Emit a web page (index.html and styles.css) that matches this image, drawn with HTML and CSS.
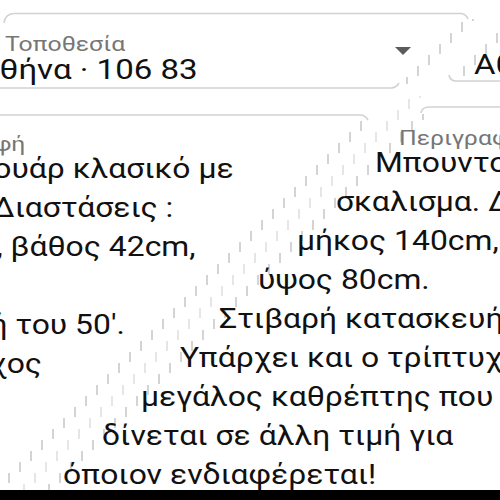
FILE: index.html
```html
<!DOCTYPE html>
<html lang="el">
<head>
<meta charset="utf-8">
<title>Αγγελία</title>
<link rel="stylesheet" href="styles.css">
</head>
<body>
<div class="canvas">
  <svg class="edges" width="500" height="500" viewBox="0 0 500 500">
    <g class="hline">
      <path d="M4 23 Q5 14 14 13.5 H461 Q466 14 468 19"/>
      <path d="M0 88 H391 Q396 88 399 83"/>
      <path d="M0 115 H360 Q365 115 368 120"/>
      <path d="M449 75 Q450 81 456 81 H500"/>
      <path d="M421 113 Q422 107 429 107 H500"/>
    </g>
    <g class="stairs">
      <path class="stair" data-c="484" data-y0="19" data-y1="84"/>
      <path class="stair" data-c="482" data-y0="121" data-y1="490"/>
      <path class="stair" data-c="530" data-y0="26" data-y1="76"/>
      <path class="stair" data-c="533" data-y0="114" data-y1="490"/>
      <path class="stair faint" data-c="508" data-y0="96" data-y1="490"/>
    </g>
  </svg>

  <div class="copy">
    <span class="t lbl a-loc-lbl">Τοποθεσία</span>
    <span class="t val a-loc-val">Αθήνα · 106 83</span>
    <span class="arrow a-arrow"></span>
    <span class="t lbl a-desc-lbl">Περιγραφή</span>
    <div class="lines a-lines">
      <div class="ln" style="--i:0"><span class="t">Μπουντουάρ κλασικό με</span></div>
      <div class="ln" style="--i:1"><span class="t">σκαλισμα. Διαστάσεις :</span></div>
      <div class="ln" style="--i:2"><span class="t">μήκος 140cm, βάθος 42cm,</span></div>
      <div class="ln" style="--i:3"><span class="t">ύψος 80cm.</span></div>
      <div class="ln" style="--i:4"><span class="t">Στιβαρή κατασκευή του 50'.</span></div>
      <div class="ln" style="--i:5"><span class="t">Υπάρχει και ο τρίπτυχος</span></div>
      <div class="ln" style="--i:6"><span class="t">μεγάλος καθρέπτης που</span></div>
    </div>
  </div>

  <div class="copy">
    <span class="t val b-loc-val">Αθήνα · 106 83</span>
    <span class="t lbl b-desc-lbl">Περιγραφή</span>
    <div class="lines b-lines">
      <div class="ln" style="--i:0"><span class="t">Μπουντουάρ κλασικό με</span></div>
      <div class="ln" style="--i:1"><span class="t">σκαλισμα. Διαστάσεις :</span></div>
      <div class="ln" style="--i:2"><span class="t">μήκος 140cm, βάθος 42cm,</span></div>
      <div class="ln" style="--i:3"><span class="t">ύψος 80cm.</span></div>
      <div class="ln" style="--i:4"><span class="t">Στιβαρή κατασκευή του 50'.</span></div>
      <div class="ln" style="--i:5"><span class="t">Υπάρχει και ο τρίπτυχος</span></div>
      <div class="ln" style="--i:6"><span class="t">μεγάλος καθρέπτης που</span></div>
      <div class="ln" style="--i:7"><span class="t">δίνεται σε άλλη τιμή για</span></div>
      <div class="ln" style="--i:8"><span class="t">όποιον ενδιαφέρεται!</span></div>
    </div>
  </div>

  <div class="strip"></div>
</div>
<script src="script.js"></script>
</body>
</html>
```

FILE: styles.css
```css
html, body {
  margin: 0;
  padding: 0;
  background: #ffffff;
}
body {
  font-family: "Roboto", "Noto Sans", sans-serif;
  color: #111111;
}
.canvas {
  position: relative;
  width: 500px;
  height: 500px;
  overflow: hidden;
  background: #ffffff;
}
.edges {
  position: absolute;
  left: 0;
  top: 0;
}
.hline path {
  fill: none;
  stroke: #d2d2d2;
  stroke-width: 1.6;
}
.stair {
  fill: none;
  stroke: #d4d4d4;
  stroke-width: 2;
}
.stair.faint {
  stroke: #e6e6e6;
}
.copy {
  position: absolute;
  left: 0;
  top: 0;
  width: 1200px;
  height: 500px;
}
.t {
  display: inline-block;
  white-space: nowrap;
  transform: scaleX(1.18);
  transform-origin: 0 50%;
}
.lbl {
  position: absolute;
  font-size: 21px;
  line-height: 24px;
  color: #767676;
}
.val {
  position: absolute;
  font-size: 28px;
  line-height: 34px;
  color: #111111;
}
.a-loc-lbl { left: 5px; top: 32px; }
.a-loc-val { left: -22px; top: 53px; }
.b-loc-val { left: 474px; top: 48px; }
.a-desc-lbl { left: -99px; top: 132px; }
.b-desc-lbl { left: 399px; top: 126px; }
.arrow {
  position: absolute;
  width: 0;
  height: 0;
  border-left: 8px solid transparent;
  border-right: 8px solid transparent;
  border-top: 8px solid #5c5c5c;
}
.a-arrow { left: 395px; top: 47px; }
.lines {
  position: absolute;
  left: 0;
  display: flex;
  flex-direction: column;
}
.a-lines { top: 150px; --x0: -121px; }
.b-lines { top: 144px; --x0: 375px; }
.ln {
  height: 39px;
  font-size: 27px;
  line-height: 39px;
  white-space: nowrap;
  margin-left: calc(var(--x0) - var(--i) * 39px);
}
.strip {
  position: absolute;
  left: 0;
  right: 0;
  bottom: 0;
  height: 10px;
  background: #000000;
}
```

FILE: script.js
```js
document.querySelectorAll('path.stair').forEach(function (p) {
  var c = +p.dataset.c, y0 = +p.dataset.y0, y1 = +p.dataset.y1, b = 11;
  var d = '';
  for (var y = Math.floor(y0 / b) * b; y < y1; y += b) {
    var top = Math.max(y, y0), bot = Math.min(y + b - 1, y1);
    if (bot - top < 2) continue;
    d += 'M' + (c - y) + ' ' + top + 'V' + bot;
  }
  p.setAttribute('d', d);
});
```
